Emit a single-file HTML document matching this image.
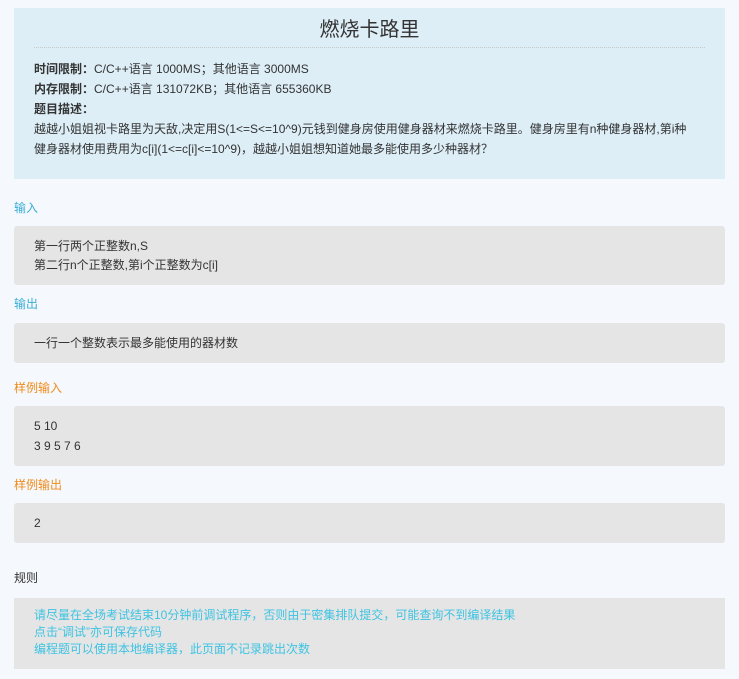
<!DOCTYPE html>
<html><head><meta charset="utf-8"><style>
*{margin:0;padding:0;box-sizing:border-box}
body{width:739px;height:679px;background:#f5f8fc;font-family:"Liberation Sans","Noto Sans CJK SC",sans-serif;font-size:12px;color:#333;position:relative;overflow:hidden}
.a{position:absolute}
.hd{left:14px;top:8px;width:711px;height:171px;background:#ddeef7}
.title{left:0;width:739px;top:16px;text-align:center;font-size:20px;color:#333;line-height:28px}
.dot{left:34px;width:671px;top:47px;border-top:1px dotted #c8c8c8}
.t{left:34px;line-height:20px;white-space:nowrap}
.box{left:14px;width:711px;background:#e5e5e5;border-radius:3px}
.lb{left:14px;line-height:20px}
.blue{color:#3aaed8}.org{color:#f08c1c}
</style></head><body>
<div class="a hd"></div>
<div class="a title">燃烧卡路里</div>
<div class="a dot"></div>
<div class="a t" style="top:59px"><b>时间限制：</b>C/C++语言 1000MS；其他语言 3000MS</div>
<div class="a t" style="top:79px"><b>内存限制：</b>C/C++语言 131072KB；其他语言 655360KB</div>
<div class="a t" style="top:99px"><b>题目描述：</b></div>
<div class="a t" style="top:119px">越越小姐姐视卡路里为天敌,决定用S(1&lt;=S&lt;=10^9)元钱到健身房使用健身器材来燃烧卡路里。健身房里有n种健身器材,第i种</div>
<div class="a t" style="top:139px">健身器材使用费用为c[i](1&lt;=c[i]&lt;=10^9)，越越小姐姐想知道她最多能使用多少种器材？</div>

<div class="a lb blue" style="top:198px">输入</div>
<div class="a box" style="top:226px;height:59px"></div>
<div class="a t" style="top:236px">第一行两个正整数n,S</div>
<div class="a t" style="top:255px">第二行n个正整数,第i个正整数为c[i]</div>

<div class="a lb blue" style="top:294px">输出</div>
<div class="a box" style="top:323px;height:40px"></div>
<div class="a t" style="top:333px">一行一个整数表示最多能使用的器材数</div>

<div class="a lb org" style="top:378px">样例输入</div>
<div class="a box" style="top:406px;height:60px"></div>
<div class="a t" style="top:416px">5 10</div>
<div class="a t" style="top:436px">3 9 5 7 6</div>

<div class="a lb org" style="top:475px">样例输出</div>
<div class="a box" style="top:503px;height:40px"></div>
<div class="a t" style="top:513px">2</div>

<div class="a lb" style="top:568px">规则</div>
<div class="a box" style="top:598px;height:71px;border-radius:0"></div>
<div class="a t" style="top:607px;line-height:17px;color:#3ec3e2">请尽量在全场考试结束10分钟前调试程序，否则由于密集排队提交，可能查询不到编译结果<br>点击“调试”亦可保存代码<br>编程题可以使用本地编译器，此页面不记录跳出次数</div>
</body></html>
